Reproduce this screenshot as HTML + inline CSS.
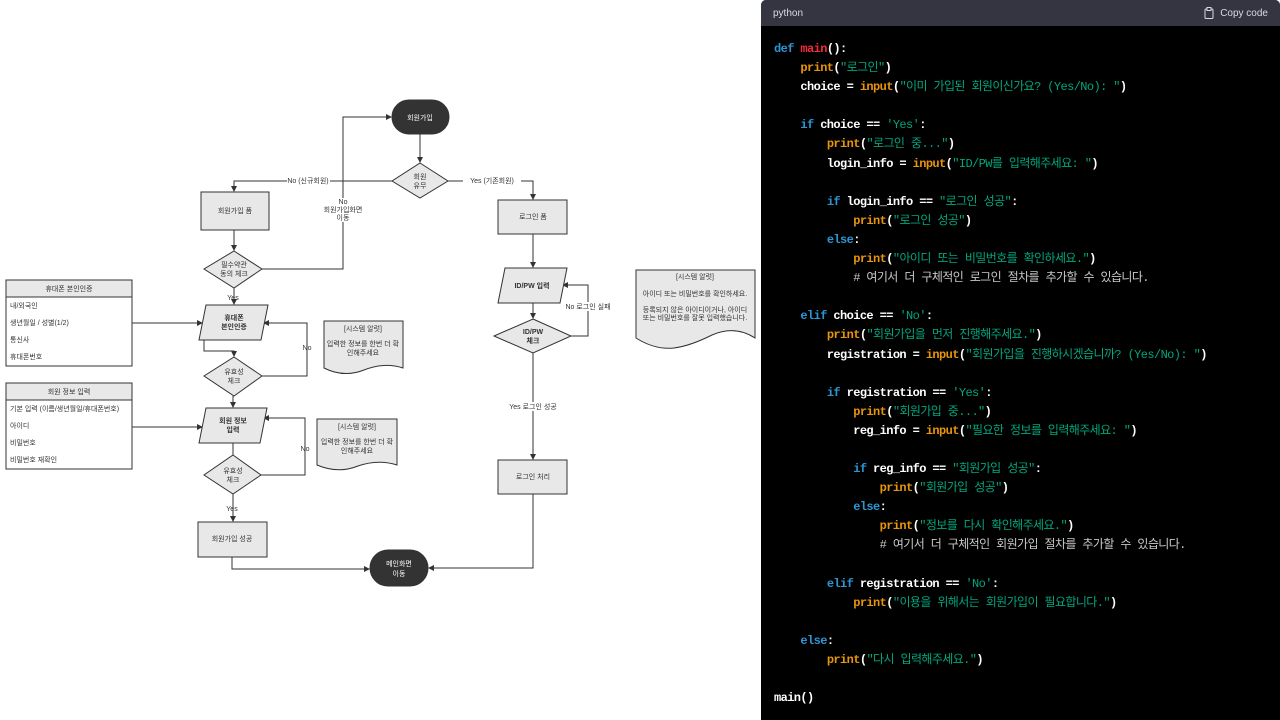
<!DOCTYPE html>
<html><head><meta charset="utf-8">
<style>
*{margin:0;padding:0;box-sizing:border-box}
body{width:1280px;height:720px;background:#fff;position:relative;overflow:hidden;font-family:"Liberation Sans","Noto Sans CJK KR",sans-serif}
#code{position:absolute;left:761px;top:0;width:519px;height:720px;background:#000;border-radius:5px 5px 0 0}
#hdr{height:26px;background:#343541;border-radius:5px 5px 0 0;color:#d9d9e3;font-size:10px;display:flex;align-items:center;justify-content:space-between;padding:0 12px}
#hdr span.cp{display:flex;align-items:center;gap:6px}
pre{position:absolute;left:13px;top:40px;font-family:"Liberation Mono","Noto Sans CJK KR",monospace;font-size:12px;letter-spacing:-0.6px;line-height:19.09px;color:#fff;font-weight:bold}
.k{color:#2e95d3}.f{color:#f22c3d}.b{color:#e9950c}.s{color:#00a67d;font-weight:normal}.c{color:#c8c8c8;font-weight:normal}
svg text{font-family:"Liberation Sans","Noto Sans CJK KR",sans-serif;font-size:7px;fill:#333;text-anchor:middle}
svg text.l{text-anchor:start}
</style></head><body>
<svg width="760" height="720" style="position:absolute;left:0;top:0">
<defs><marker id="a" markerWidth="6" markerHeight="6" refX="5" refY="3" orient="auto"><path d="M0,0L6,3L0,6z" fill="#333"/></marker></defs>
<g fill="none" stroke="#333" stroke-width="1">
<path d="M420,134V162" marker-end="url(#a)"/>
<path d="M392,181H234V191" marker-end="url(#a)"/>
<path d="M448,181H533V199" marker-end="url(#a)"/>
<path d="M234,230V250" marker-end="url(#a)"/>
<path d="M262,269H343V117H391" marker-end="url(#a)"/>
<path d="M234,288V304" marker-end="url(#a)"/>
<path d="M132,323H202" marker-end="url(#a)"/>
<path d="M204,340V351H234V356" marker-end="url(#a)"/>
<path d="M262,376H307V323H264" marker-end="url(#a)"/>
<path d="M233,396V407" marker-end="url(#a)"/>
<path d="M132,427H202" marker-end="url(#a)"/>
<path d="M233,443V455"/>
<path d="M261,475H305V418H264" marker-end="url(#a)"/>
<path d="M233,494V521" marker-end="url(#a)"/>
<path d="M232,557V569H369" marker-end="url(#a)"/>
<path d="M533,234V267" marker-end="url(#a)"/>
<path d="M533,303V318" marker-end="url(#a)"/>
<path d="M571,336H588V285H563" marker-end="url(#a)"/>
<path d="M533,353V459" marker-end="url(#a)"/>
<path d="M533,494V568H429" marker-end="url(#a)"/>
</g>
<g fill="#e8e8e8" stroke="#333">
<rect x="392" y="100" width="57" height="34" rx="17" fill="#333"/>
<rect x="370" y="550" width="58" height="36" rx="18" fill="#333"/>
<path d="M420,163L448,181L420,198L392,181z"/>
<rect x="201" y="192" width="68" height="38"/>
<path d="M234,251L262,269L234,288L204,269z"/>
<path d="M206,305H268L261,340H199z"/>
<path d="M234,357L262,376L234,396L204,376z"/>
<path d="M206,408H267L260,443H199z"/>
<path d="M233,455L261,475L233,494L204,475z"/>
<rect x="198" y="522" width="69" height="35"/>
<rect x="498" y="200" width="69" height="34"/>
<path d="M505,268H567L560,303H498z"/>
<path d="M533,319L571,336L533,353L494,336z"/>
<rect x="498" y="460" width="69" height="34"/>
<path d="M324,321H403V368Q384,362 364,370Q344,378 324,368z"/>
<path d="M317,419H397V465Q378,459 358,466Q338,474 317,465z"/>
<path d="M636,270H755V338Q735,325 712,335Q690,346 674,348Q655,350 636,338z"/>
<rect x="6" y="280" width="126" height="86" fill="#fff"/>
<rect x="6" y="280" width="126" height="17"/>
<rect x="6" y="383" width="126" height="86" fill="#fff"/>
<rect x="6" y="383" width="126" height="17"/>
</g>
<text x="420" y="120" style="fill:#fff">회원가입</text>
<text x="399" y="566" style="fill:#fff">메인화면</text><text x="399" y="576" style="fill:#fff">이동</text>
<text x="420" y="179">회원</text><text x="420" y="188">유무</text>
<text x="235" y="213">회원가입 폼</text>
<text x="234" y="267">필수약관</text><text x="234" y="276">동의 체크</text>
<text x="234" y="320" font-weight="bold">휴대폰</text><text x="234" y="329" font-weight="bold">본인인증</text>
<text x="234" y="374">유효성</text><text x="234" y="383">체크</text>
<text x="233" y="423" font-weight="bold">회원 정보</text><text x="233" y="432" font-weight="bold">입력</text>
<text x="233" y="473">유효성</text><text x="233" y="482">체크</text>
<text x="232" y="541">회원가입 성공</text>
<text x="533" y="219">로그인 폼</text>
<text x="532" y="288" font-weight="bold">ID/PW 입력</text>
<text x="533" y="334" font-weight="bold">ID/PW</text><text x="533" y="343" font-weight="bold">체크</text>
<text x="533" y="479">로그인 처리</text>
<rect x="287" y="176" width="43" height="9" fill="#fff"/><text x="308" y="183">No (신규회원)</text>
<rect x="463" y="176" width="58" height="9" fill="#fff"/><text x="492" y="183">Yes (기존회원)</text>
<rect x="322" y="198" width="42" height="24" fill="#fff"/><text x="343" y="204">No</text><text x="343" y="212">회원가입화면</text><text x="343" y="220">이동</text>
<text x="233" y="300">Yes</text>
<text x="307" y="350">No</text><text x="305" y="451">No</text>
<text x="232" y="511">Yes</text>
<rect x="565" y="302" width="46" height="9" fill="#fff"/><text x="588" y="309">No 로그인 실패</text>
<rect x="508" y="402" width="50" height="9" fill="#fff"/><text x="533" y="409">Yes 로그인 성공</text>
<text x="363" y="331">[시스템 알럿]</text><text x="363" y="346">입력한 정보를 한번 더 확</text><text x="363" y="355">인해주세요</text>
<text x="357" y="429">[시스템 알럿]</text><text x="357" y="444">입력한 정보를 한번 더 확</text><text x="357" y="453">인해주세요</text>
<text x="695" y="279">[시스템 알럿]</text><text x="695" y="296">아이디 또는 비밀번호를 확인하세요.</text><text x="695" y="312">등록되지 않은 아이디이거나, 아이디</text><text x="695" y="320">또는 비밀번호를 잘못 입력했습니다.</text>
<text x="69" y="291">휴대폰 본인인증</text>
<text x="10" y="308" class="l">내/외국인</text><text x="10" y="325" class="l">생년월일 / 성별(1/2)</text><text x="10" y="342" class="l">통신사</text><text x="10" y="359" class="l">휴대폰번호</text>
<text x="69" y="394">회원 정보 입력</text>
<text x="10" y="411" class="l">기본 입력 (이름/생년월일/휴대폰번호)</text><text x="10" y="428" class="l">아이디</text><text x="10" y="445" class="l">비밀번호</text><text x="10" y="462" class="l">비밀번호 재확인</text>
</svg>
<div id="code">
<div id="hdr"><span>python</span><span class="cp"><svg width="10" height="12" viewBox="0 0 10 12"><rect x="1" y="2" width="8" height="9.5" rx="1" fill="none" stroke="#d9d9e3"/><rect x="3" y="0.5" width="4" height="3" fill="#343541" stroke="#d9d9e3"/></svg>Copy code</span></div>
<pre><span class="k">def</span> <span class="f">main</span>():
    <span class="b">print</span>(<span class="s">"로그인"</span>)
    choice = <span class="b">input</span>(<span class="s">"이미 가입된 회원이신가요? (Yes/No): "</span>)

    <span class="k">if</span> choice == <span class="s">'Yes'</span>:
        <span class="b">print</span>(<span class="s">"로그인 중..."</span>)
        login_info = <span class="b">input</span>(<span class="s">"ID/PW를 입력해주세요: "</span>)

        <span class="k">if</span> login_info == <span class="s">"로그인 성공"</span>:
            <span class="b">print</span>(<span class="s">"로그인 성공"</span>)
        <span class="k">else</span>:
            <span class="b">print</span>(<span class="s">"아이디 또는 비밀번호를 확인하세요."</span>)
            <span class="c"># 여기서 더 구체적인 로그인 절차를 추가할 수 있습니다.</span>

    <span class="k">elif</span> choice == <span class="s">'No'</span>:
        <span class="b">print</span>(<span class="s">"회원가입을 먼저 진행해주세요."</span>)
        registration = <span class="b">input</span>(<span class="s">"회원가입을 진행하시겠습니까? (Yes/No): "</span>)

        <span class="k">if</span> registration == <span class="s">'Yes'</span>:
            <span class="b">print</span>(<span class="s">"회원가입 중..."</span>)
            reg_info = <span class="b">input</span>(<span class="s">"필요한 정보를 입력해주세요: "</span>)

            <span class="k">if</span> reg_info == <span class="s">"회원가입 성공"</span>:
                <span class="b">print</span>(<span class="s">"회원가입 성공"</span>)
            <span class="k">else</span>:
                <span class="b">print</span>(<span class="s">"정보를 다시 확인해주세요."</span>)
                <span class="c"># 여기서 더 구체적인 회원가입 절차를 추가할 수 있습니다.</span>

        <span class="k">elif</span> registration == <span class="s">'No'</span>:
            <span class="b">print</span>(<span class="s">"이용을 위해서는 회원가입이 필요합니다."</span>)

    <span class="k">else</span>:
        <span class="b">print</span>(<span class="s">"다시 입력해주세요."</span>)

main()</pre>
</div>
</body></html>
